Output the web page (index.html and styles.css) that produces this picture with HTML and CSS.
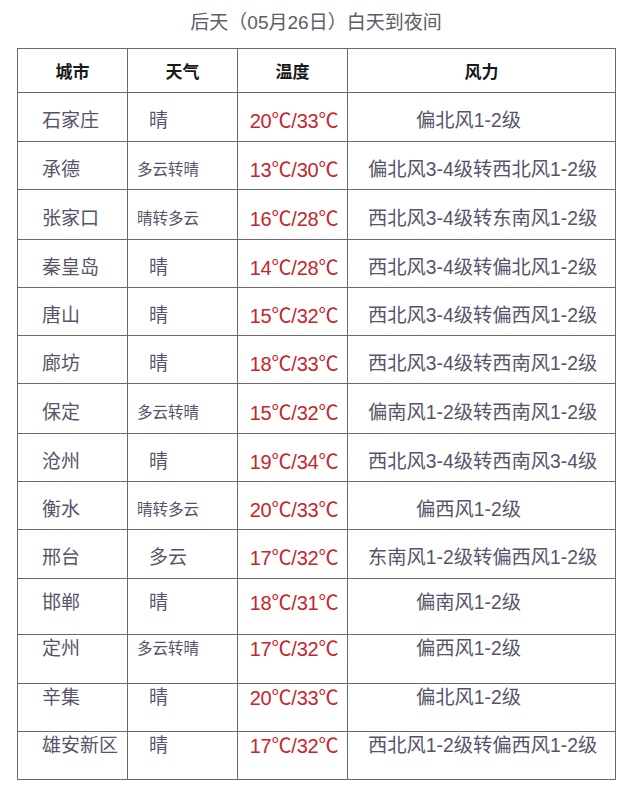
FILE: index.html
```html
<!DOCTYPE html>
<html lang="zh-CN">
<head>
<meta charset="utf-8">
<title>后天天气</title>
<link rel="stylesheet" href="styles.css">
</head>
<body>
<div class="page">
  <h1 class="title">后天（05月26日）白天到夜间</h1>
  <table class="wx">
    <colgroup>
      <col class="c1"><col class="c2"><col class="c3"><col class="c4">
    </colgroup>
    <thead>
      <tr class="head"><th>城市</th><th>天气</th><th>温度</th><th>风力</th></tr>
    </thead>
    <tbody>
      <tr class="h49 mid"><td class="city">石家庄</td><td class="w1">晴</td><td class="t">20℃/33℃</td><td class="ws">偏北风1-2级</td></tr>
      <tr class="h48 mid"><td class="city">承德</td><td class="w4">多云转晴</td><td class="t">13℃/30℃</td><td class="wl">偏北风3-4级转西北风1-2级</td></tr>
      <tr class="h50 mid"><td class="city">张家口</td><td class="w4">晴转多云</td><td class="t">16℃/28℃</td><td class="wl">西北风3-4级转东南风1-2级</td></tr>
      <tr class="h48 mid"><td class="city">秦皇岛</td><td class="w1">晴</td><td class="t">14℃/28℃</td><td class="wl">西北风3-4级转偏北风1-2级</td></tr>
      <tr class="h48 mid"><td class="city">唐山</td><td class="w1">晴</td><td class="t">15℃/32℃</td><td class="wl">西北风3-4级转偏西风1-2级</td></tr>
      <tr class="h48 mid"><td class="city">廊坊</td><td class="w1">晴</td><td class="t">18℃/33℃</td><td class="wl">西北风3-4级转西南风1-2级</td></tr>
      <tr class="h50 mid"><td class="city">保定</td><td class="w4">多云转晴</td><td class="t">15℃/32℃</td><td class="wl">偏南风1-2级转西南风1-2级</td></tr>
      <tr class="h48 mid"><td class="city">沧州</td><td class="w1">晴</td><td class="t">19℃/34℃</td><td class="wl">西北风3-4级转西南风3-4级</td></tr>
      <tr class="h48 mid"><td class="city">衡水</td><td class="w4">晴转多云</td><td class="t">20℃/33℃</td><td class="ws">偏西风1-2级</td></tr>
      <tr class="h49 mid"><td class="city">邢台</td><td class="w1">多云</td><td class="t">17℃/32℃</td><td class="wl">东南风1-2级转偏西风1-2级</td></tr>
      <tr class="h56 up"><td class="city">邯郸</td><td class="w1">晴</td><td class="t">18℃/31℃</td><td class="ws">偏南风1-2级</td></tr>
      <tr class="h49 top"><td class="city">定州</td><td class="w4">多云转晴</td><td class="t">17℃/32℃</td><td class="ws">偏西风1-2级</td></tr>
      <tr class="h48 top"><td class="city">辛集</td><td class="w1">晴</td><td class="t">20℃/33℃</td><td class="ws">偏北风1-2级</td></tr>
      <tr class="h48 top"><td class="city">雄安新区</td><td class="w1">晴</td><td class="t">17℃/32℃</td><td class="wl">西北风1-2级转偏西风1-2级</td></tr>
    </tbody>
  </table>
</div>
</body>
</html>
```

FILE: styles.css
```css
html, body {
  margin: 0;
  padding: 0;
  background: #ffffff;
}

.page {
  width: 630px;
  padding: 0 0 0 17px;
  box-sizing: border-box;
  font-family: "Liberation Sans", "Noto Sans CJK SC", sans-serif;
}

.title {
  margin: 0;
  width: 598px;
  height: 48px;
  line-height: 46px;
  text-align: center;
  font-size: 19px;
  font-weight: 400;
  color: #5e5c66;
}

.wx {
  border-collapse: collapse;
  table-layout: fixed;
  width: 598px;
  border: 1px solid #707070;
}

.c1, .c2, .c3 { width: 110px; }
.c4 { width: 268px; }

.wx th, .wx td {
  border: 1px solid #6a6a6a;
  padding: 0;
  vertical-align: middle;
  white-space: nowrap;
  line-height: 24px;
}

.head { height: 44px; }
.head th {
  font-family: "Noto Sans CJK SC", sans-serif;
  font-size: 17px;
  font-weight: 700;
  color: #1a1a1a;
  text-align: center;
}

.h48 { height: 48px; }
.h49 { height: 49px; }
.h50 { height: 50px; }
.h56 { height: 56px; }

.mid td { padding-top: 8px; }
.up td { vertical-align: top; padding-top: 12px; }
.top td { vertical-align: top; padding-top: 2px; }

.city {
  font-size: 19px;
  color: #57546a;
  padding-left: 24px !important;
  text-align: left;
}

.w1 {
  font-size: 19px;
  color: #57546a;
  padding-left: 21px !important;
}

.w4 {
  font-size: 15.5px;
  color: #57546a;
  padding-left: 9px !important;
}

.t {
  font-size: 20px;
  letter-spacing: -0.2px;
  color: #c4262c;
  text-align: center;
  padding-left: 3px !important;
}

.ws {
  font-size: 19.3px;
  color: #57546a;
  padding-left: 68px !important;
}

.wl {
  font-size: 19.3px;
  color: #57546a;
  padding-left: 20px !important;
}
```
